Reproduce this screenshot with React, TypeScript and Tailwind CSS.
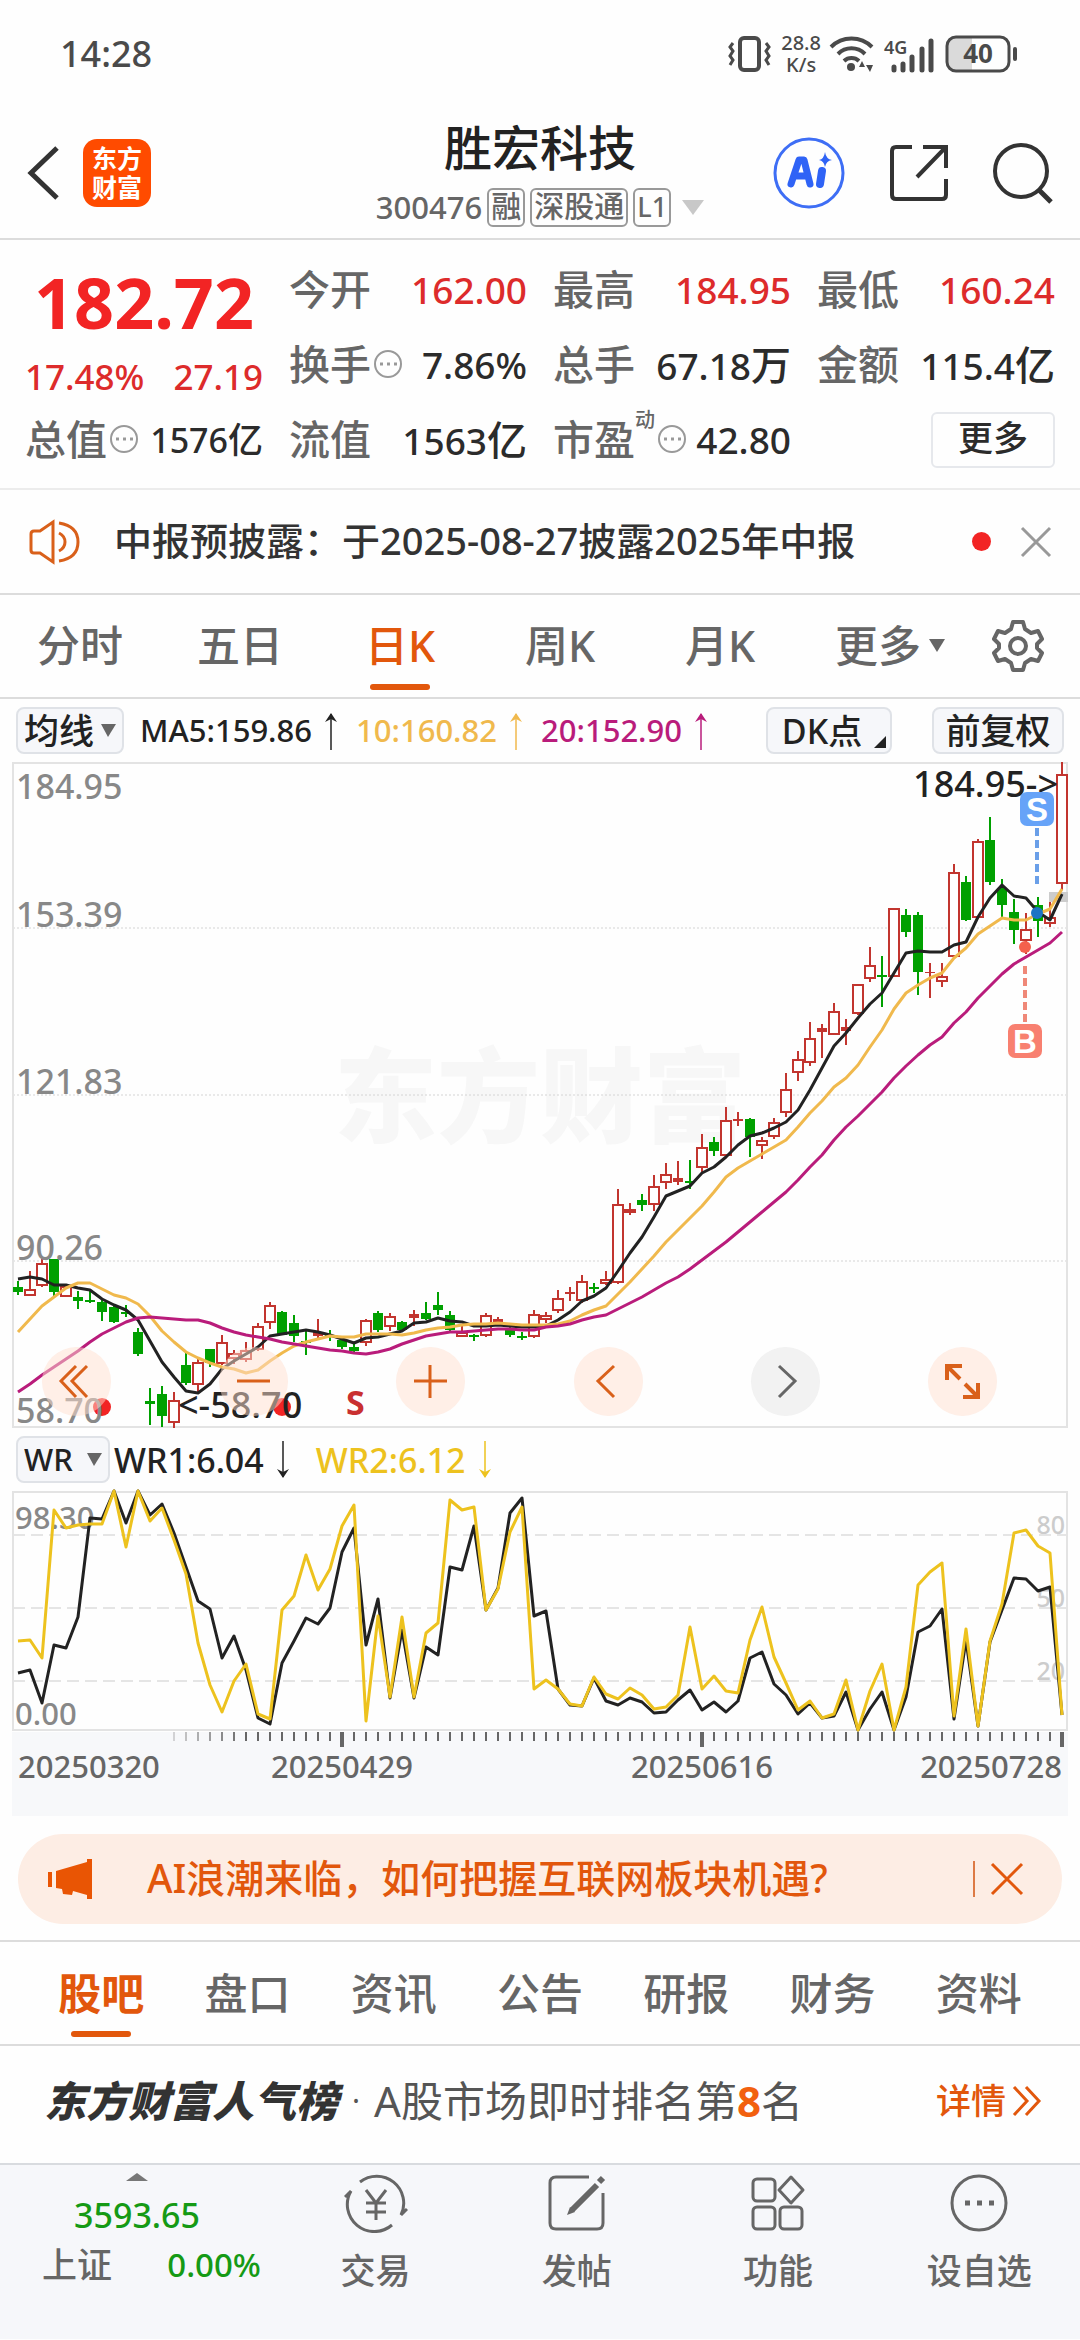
import React, { useState } from "react";
import clsx from "clsx";

type Candle = [kind: "g" | "r" | "f", high: number, top: number, bottom: number, low: number];

// g = falling, r = rising (hollow), f = rising (filled)
const candles: Candle[] = [
  ["g", 519, 525, 530, 533], ["r", 509, 527, 534, 534], ["r", 497, 501, 524, 525], ["g", 497, 497, 530, 534],
  ["r", 522, 524, 535, 535], ["g", 529, 535, 539, 547], ["g", 529, 538, 540, 541], ["g", 538, 540, 550, 559],
  ["g", 544, 545, 560, 561], ["g", 543, 550, 552, 555], ["g", 566, 570, 592, 594], ["g", 626, 639, 642, 663],
  ["g", 624, 632, 654, 665], ["r", 630, 638, 661, 666], ["g", 590, 603, 621, 623], ["r", 596, 600, 623, 631],
  ["g", 587, 587, 601, 605], ["r", 573, 580, 602, 603], ["r", 588, 591, 597, 602], ["r", 580, 588, 598, 600],
  ["r", 561, 564, 588, 589], ["r", 540, 543, 561, 567], ["g", 549, 550, 573, 573], ["g", 553, 561, 574, 580],
  ["g", 569, 579, 581, 593], ["f", 557, 570, 574, 576], ["g", 568, 573, 575, 579], ["g", 577, 578, 585, 587],
  ["g", 581, 585, 589, 591], ["r", 557, 558, 581, 584], ["g", 549, 551, 568, 570], ["r", 551, 554, 565, 569],
  ["g", 559, 560, 568, 570], ["f", 548, 552, 556, 564], ["g", 540, 551, 557, 558], ["g", 530, 543, 548, 553],
  ["g", 549, 553, 568, 569], ["r", 562, 570, 575, 575], ["g", 572, 573, 575, 579], ["r", 551, 553, 574, 575],
  ["f", 555, 557, 561, 564], ["g", 561, 567, 573, 575], ["g", 570, 574, 576, 578], ["r", 548, 552, 575, 576],
  ["r", 550, 553, 558, 561], ["r", 528, 536, 549, 551], ["f", 525, 530, 532, 539], ["r", 513, 519, 539, 541],
  ["g", 521, 525, 527, 531], ["r", 509, 517, 522, 523], ["r", 427, 442, 521, 522], ["r", 441, 447, 451, 453],
  ["g", 432, 438, 443, 449], ["r", 413, 424, 443, 449], ["r", 401, 412, 421, 427], ["f", 399, 416, 420, 423],
  ["g", 398, 419, 421, 427], ["r", 372, 385, 406, 411], ["g", 375, 380, 389, 394], ["r", 345, 358, 394, 395],
  ["f", 350, 357, 359, 364], ["g", 356, 357, 375, 395], ["r", 375, 378, 384, 397], ["r", 356, 360, 375, 377],
  ["r", 311, 327, 351, 355], ["r", 289, 297, 311, 319], ["r", 260, 276, 301, 304], ["f", 262, 266, 270, 296],
  ["r", 241, 249, 273, 273], ["f", 257, 265, 269, 283], ["r", 222, 222, 252, 253], ["r", 185, 203, 217, 220],
  ["g", 194, 213, 215, 245], ["r", 146, 146, 215, 215], ["g", 147, 153, 170, 175], ["g", 150, 153, 210, 233],
  ["f", 201, 210, 211, 236], ["r", 201, 214, 220, 225], ["r", 102, 110, 195, 195], ["g", 114, 120, 158, 159],
  ["r", 77, 79, 156, 156], ["g", 55, 78, 120, 123], ["g", 117, 126, 143, 156], ["g", 137, 150, 168, 182],
  ["r", 151, 167, 179, 192], ["g", 135, 143, 159, 175], ["r", 140, 155, 162, 165], ["r", 0, 12, 122, 128],
];

const ma5 = [
  517, 515, 517, 523, 523, 526, 528, 537, 543, 548, 558, 579, 600, 615, 629, 631, 622, 607, 599, 592, 585, 574,
  572, 570, 568, 570, 573, 577, 581, 576, 575, 572, 569, 561, 560, 556, 559, 560, 564, 564, 563, 564, 565, 565,
  564, 558, 550, 539, 534, 526, 509, 491, 475, 455, 434, 429, 424, 411, 405, 395, 383, 374, 371, 366, 360, 348,
  328, 306, 284, 271, 256, 242, 231, 211, 191, 189, 190, 190, 183, 180, 155, 136, 123, 134, 136, 150, 158, 132,
];
const ma10 = [
  570, 557, 544, 535, 526, 521, 521, 527, 533, 536, 542, 554, 569, 580, 590, 596, 601, 605, 607, 611, 608, 599,
  591, 584, 580, 577, 574, 575, 575, 572, 572, 572, 573, 571, 568, 566, 565, 563, 562, 562, 561, 562, 563, 563,
  563, 562, 559, 553, 548, 544, 532, 520, 507, 494, 480, 468, 456, 444, 430, 415, 406, 399, 392, 385, 378, 365,
  351, 339, 325, 316, 303, 285, 268, 247, 231, 223, 216, 211, 196, 186, 172, 164, 156, 158, 158, 152, 147, 127,
];
const ma20 = [
  630, 622, 613, 605, 597, 589, 580, 572, 566, 560, 556, 555, 556, 557, 558, 558, 561, 566, 570, 573, 575, 577,
  580, 582, 584, 586, 588, 589, 591, 592, 590, 587, 582, 578, 574, 572, 570, 570, 569, 568, 567, 567, 568, 568,
  565, 564, 562, 558, 555, 553, 547, 541, 535, 528, 521, 515, 507, 498, 489, 480, 470, 460, 450, 440, 430, 418,
  405, 393, 378, 365, 354, 342, 330, 316, 304, 293, 283, 275, 261, 250, 236, 224, 212, 202, 195, 188, 181, 170,
];
const wr1 = [
  182, 179, 212, 154, 157, 126, 27, 28, 0, 32, 0, 24, 13, 42, 76, 110, 118, 167, 145, 179, 227, 233, 172, 150,
  127, 133, 117, 61, 37, 154, 108, 207, 139, 207, 156, 164, 76, 79, 35, 119, 97, 22, 7, 125, 120, 198, 214, 215,
  187, 210, 214, 207, 211, 222, 221, 209, 199, 219, 211, 221, 210, 167, 161, 193, 204, 223, 212, 227, 225, 201,
  239, 218, 201, 239, 206, 141, 135, 118, 228, 149, 235, 151, 119, 87, 88, 100, 96, 224,
];
const wr2 = [
  150, 149, 167, 19, 37, 34, 33, 33, 0, 56, 0, 30, 17, 49, 83, 152, 194, 221, 190, 173, 223, 228, 119, 105, 64,
  99, 78, 35, 14, 230, 125, 206, 126, 206, 142, 132, 9, 19, 16, 119, 98, 41, 16, 198, 189, 198, 213, 215, 186,
  203, 208, 197, 204, 218, 216, 204, 136, 198, 185, 200, 202, 149, 116, 166, 192, 219, 210, 227, 223, 189, 239,
  200, 173, 239, 196, 94, 81, 72, 225, 138, 235, 150, 113, 42, 39, 55, 62, 224,
];

const cx = (i: number) => 6 + i * 12;
const toPoints = (ys: number[]) => ys.map((y, i) => `${cx(i)},${y}`).join(" ");

const periods = ["分时", "五日", "日K", "周K", "月K"];
const sections = ["股吧", "盘口", "资讯", "公告", "研报", "财务", "资料"];

const StatusBar: React.FC = () => (
  <div className="flex h-[108px] items-center pr-[61px] pl-[60px] text-[#4a4a4a]">
    <span className="text-[36px] leading-none font-medium">14:28</span>
    <div className="ml-auto flex items-center gap-[8px]">
      <svg width="46" height="38" viewBox="0 0 46 38" fill="none" stroke="currentColor">
        <rect x="13" y="3" width="19" height="32" rx="4" strokeWidth="4" />
        <path d="M6 8l-3 4 3 4-3 5 3 4-3 5M39 8l3 4-3 4 3 5-3 4 3 5" strokeWidth="3" />
      </svg>
      <div className="flex flex-col text-center text-[20px] leading-[22px] font-medium">
        <span>28.8</span>
        <span>K/s</span>
      </div>
      <svg width="46" height="38" viewBox="0 0 46 38" fill="none" stroke="currentColor" strokeWidth="4">
        <path d="M2 12a29 29 0 0 1 41 0M9 19a19 19 0 0 1 27 0M15 26a11 11 0 0 1 15 0" />
        <circle cx="22" cy="32" r="4" fill="currentColor" stroke="none" />
        <path d="M30 32h6l-3-6zM37 30h7l-3 7z" fill="currentColor" stroke="none" />
      </svg>
      <svg width="54" height="42" viewBox="0 -4 54 42" fill="none" stroke="currentColor" strokeWidth="5" strokeLinecap="round">
        <path d="M11 30v3M20 27v6M29 20v13M39 12v21M48 4v29" />
        <text x="1" y="17" fontSize="18" fontWeight="600" fill="currentColor" stroke="none">4G</text>
      </svg>
      <svg width="74" height="38" viewBox="0 0 74 38" fill="none">
        <path d="M10 3h17v32H10a7 7 0 0 1-7-7V10a7 7 0 0 1 7-7z" fill="#dadada" />
        <rect x="2" y="2" width="62" height="34" rx="9" stroke="currentColor" strokeWidth="3" />
        <path d="M70 14v10" stroke="currentColor" strokeWidth="4" strokeLinecap="round" />
        <text x="33" y="28" fontSize="26" fontWeight="700" textAnchor="middle" fill="currentColor">40</text>
      </svg>
    </div>
  </div>
);

const Header: React.FC = () => (
  <header className="relative flex h-[132px] items-center justify-between border-b-2 border-[#dcdcdc] px-[26px]">
    <div className="flex items-center gap-[23px]">
      <button aria-label="返回">
        <svg width="34" height="56" viewBox="0 0 34 56" fill="none" stroke="#333" strokeWidth="5">
          <path d="M31 3L5 28l26 25" />
        </svg>
      </button>
      <div className="flex h-[68px] w-[68px] flex-col items-center justify-center rounded-[14px] bg-[#ff4b00] text-[25px] leading-[29px] font-bold text-white">
        <span>东方</span>
        <span>财富</span>
      </div>
    </div>
    <div className="absolute inset-x-[300px] top-[6px] flex flex-col items-center">
      <h1 className="text-[48px] leading-[68px] font-medium text-[#222]">胜宏科技</h1>
      <div className="flex h-[50px] items-center gap-[5px] text-[31px] leading-none font-medium text-[#666]">
        <span>300476</span>
        <span className="rounded-[6px] border-2 border-[#999] px-[2px] pt-px pb-[4px] text-[30px]">融</span>
        <span className="rounded-[6px] border-2 border-[#999] px-[2px] pt-px pb-[4px] text-[30px]">深股通</span>
        <span className="rounded-[6px] border-2 border-[#999] px-[2px] pt-[3px] pb-[5px] text-[27px]">L1</span>
        <svg className="ml-[6px]" width="22" height="15" viewBox="0 0 22 15" fill="#c8c8c8">
          <path d="M0 0h22L11 15z" />
        </svg>
      </div>
    </div>
    <div className="flex items-center gap-[43px]">
      <button aria-label="AI">
        <svg width="74" height="74" viewBox="0 0 74 74" fill="none">
          <circle cx="37" cy="37" r="34" stroke="#3e6ef5" strokeWidth="3" />
          <path d="M19 48l8-24h5l6 24M23 40h12" stroke="#2f63f6" strokeWidth="7" strokeLinejoin="round" strokeLinecap="round" />
          <path d="M50 35l-2 13" stroke="#2f63f6" strokeWidth="8" strokeLinecap="round" />
          <path d="M53 16q1 7 7 8-6 1-7 7-1-6-6-7 5-1 6-8z" fill="#2f63f6" />
        </svg>
      </button>
      <button aria-label="分享">
        <svg width="60" height="60" viewBox="0 0 60 60" fill="none" stroke="#333" strokeWidth="4">
          <path d="M23 4H7q-4 0-4 4v44q0 4 4 4h46q4 0 4-4V36M34 4h23v21M57 4L28 34" />
        </svg>
      </button>
      <button aria-label="搜索">
        <svg width="62" height="62" viewBox="0 0 62 62" fill="none" stroke="#333" strokeWidth="4">
          <circle cx="29" cy="29" r="26" />
          <path d="M47 48l12 12" strokeWidth="5" />
        </svg>
      </button>
    </div>
  </header>
);

const InfoDot: React.FC = () => (
  <svg className="ml-[2px] shrink-0" width="31" height="31" viewBox="0 0 31 31" fill="none">
    <circle cx="15" cy="15" r="13" stroke="#999" strokeWidth="2" />
    <path d="M7 15h3M14 15h3M21 15h3" stroke="#999" strokeWidth="3" />
  </svg>
);

interface IStat {
  label: string;
  value: string;
  unit?: string;
  red?: boolean;
  info?: boolean;
  small?: boolean;
  sup?: string;
}

const Stat: React.FC<IStat> = ({ label, value, unit, red, info, small, sup }) => (
  <div className="flex items-center whitespace-nowrap">
    <dt className="flex items-center text-[41px] font-medium text-[#666]">
      {label}
      {sup && <sup className="-top-[20px] text-[20px]">{sup}</sup>}
      {info && <InfoDot />}
    </dt>
    <dd
      className={clsx(
        "ml-auto font-medium",
        small ? "text-[34px]" : "text-[37px]",
        red ? "text-[#dd2b2b]" : "text-[#2b2b2b]"
      )}
    >
      {value}
      {unit && <span className={small ? "text-[35px]" : "text-[40px]"}>{unit}</span>}
    </dd>
  </div>
);

const Quote: React.FC = () => (
  <section className="border-b-2 border-[#ececec] px-[25px] pt-[12px] pb-[11px]">
    <dl className="grid auto-rows-[75px] grid-cols-4 gap-x-[26px] leading-none">
      <div className="row-span-2 flex flex-col items-center pt-[12px]">
        <dd className="text-[70px] leading-[76px] font-bold text-[#f22424]">182.72</dd>
        <dd className="mt-[16px] flex w-full justify-between text-[35px] leading-[42px] font-medium text-[#dd2b2b]">
          <span>17.48%</span>
          <span>27.19</span>
        </dd>
      </div>
      <Stat label="今开" value="162.00" red />
      <Stat label="最高" value="184.95" red />
      <Stat label="最低" value="160.24" red />
      <Stat label="换手" value="7.86%" info />
      <Stat label="总手" value="67.18" unit="万" />
      <Stat label="金额" value="115.4" unit="亿" />
      <Stat label="总值" value="1576" unit="亿" info small />
      <Stat label="流值" value="1563" unit="亿" />
      <Stat label="市盈" value="42.80" sup="动" info />
      <button className="h-[56px] w-[124px] self-center justify-self-end rounded-[6px] border-2 border-[#e6e8ec] pb-[4px] text-[35px] leading-none font-medium text-[#2b2b2b]">
        更多
      </button>
    </dl>
  </section>
);

const Notice: React.FC = () => (
  <section className="flex h-[105px] items-center border-b-2 border-[#dcdcdc] pr-[28px] pl-[29px]">
    <svg width="52" height="46" viewBox="0 0 52 46" fill="none" stroke="#d9601a" strokeWidth="3">
      <path d="M24 3v40L11 34H5q-3 0-3-3V15q0-3 3-3h6z" />
      <path d="M30 14q6 3 6 9t-6 9M30 4q19 3 19 19T30 42" />
    </svg>
    <p className="ml-[33px] pb-[4px] text-[38px] leading-none font-medium text-[#333]">
      中报预披露：于2025-08-27披露2025年中报
    </p>
    <span className="ml-auto h-[19px] w-[19px] rounded-full bg-[#f22424]" />
    <button aria-label="关闭公告" className="ml-[29px]">
      <svg width="32" height="32" viewBox="0 0 32 32" stroke="#999" strokeWidth="3">
        <path d="M2 2l28 28M30 2L2 30" />
      </svg>
    </button>
  </section>
);

const PeriodTabs: React.FC = () => {
  const [current, setCurrent] = useState(2);
  return (
    <nav className="flex h-[104px] border-b-2 border-[#dcdcdc] pr-[24px] text-[43px] leading-none font-medium text-[#666]">
      {periods.map((p, i) => (
        <button
          key={p}
          onClick={() => setCurrent(i)}
          className={clsx("relative flex-[160] pb-[2px]", i === current && "text-[#e2570c]")}
        >
          {p}
          {i === current && (
            <span className="absolute bottom-[7px] left-1/2 h-[6px] w-[60px] -translate-x-1/2 rounded-full bg-[#e2570c]" />
          )}
        </button>
      ))}
      <button className="flex flex-[180] items-center justify-center gap-[8px] pb-[2px]">
        更多
        <svg width="16" height="13" viewBox="0 0 16 13" fill="#666">
          <path d="M0 0h16L8 13z" />
        </svg>
      </button>
      <button aria-label="设置" className="flex flex-[76] items-center justify-center">
        <svg width="52" height="54" viewBox="0 0 52 54" fill="none" stroke="#666" strokeWidth="4" strokeLinejoin="round">
          <path d="M21 3h10l2 7 6 4 7-2 4 8-5 5v4l5 5-4 8-7-2-6 4-2 7H21l-2-7-6-4-7 2-4-8 5-5v-4l-5-5 4-8 7 2 6-4z" />
          <circle cx="26" cy="27" r="8" />
        </svg>
      </button>
    </nav>
  );
};

const Arrow: React.FC<{ color: string; down?: boolean }> = ({ color, down }) => (
  <svg width="14" height="38" viewBox="0 0 14 38" fill="none" stroke={color} className={clsx("mx-[12px]", down && "rotate-180")}>
    <path d="M7 2v36" strokeWidth="1.5" />
    <path d="M7 1l6 9-6-3-6 3z" fill={color} stroke="none" />
  </svg>
);

const Picker: React.FC<{ label: string; options: string[]; className: string }> = ({ label, options, className }) => (
  <div className={clsx("relative h-[47px]", className)}>
    <select
      aria-label={label}
      className="h-full w-full appearance-none rounded-[8px] border-2 border-[#dfe2e7] bg-[#f6f7fa] py-0 pl-[6px] leading-none font-medium text-[#222]"
    >
      {options.map((o) => (
        <option key={o}>{o}</option>
      ))}
    </select>
    <svg className="pointer-events-none absolute top-[17px] right-[8px]" width="15" height="13" viewBox="0 0 15 13" fill="#666">
      <path d="M0 0h15L7 13z" />
    </svg>
  </div>
);

const chartButtons = [
  { label: "最前", path: "M18 3L3 18l15 16M29 3L14 18l15 16", width: 3 },
  { label: "缩小", path: "M2 18h33", width: 3 },
  { label: "放大", path: "M2 18h33M18 2v33", width: 3 },
  { label: "向前", path: "M24 3L8 18l16 16", width: 3 },
  { label: "向后", path: "M12 3l16 15-16 16", width: 3, muted: true },
  { label: "全屏", path: "M3 17V3h15M4 4l12 12M34 20v14H19M33 33L21 21", width: 4 },
];

const KLineChart: React.FC = () => (
  <div className="relative">
    <svg viewBox="0 0 1056 666" className="block h-auto w-full overflow-visible" fontSize="34" fontWeight="500">
      <text x="528" y="373" fontSize="103" fontWeight="900" textAnchor="middle" fill="#f7f7f7">东方财富</text>
      {[166, 333, 499].map((y) => (
        <path key={y} d={`M1 ${y}H1056`} stroke="#d4d4d4" strokeDasharray="2 2" />
      ))}
      <rect x="1" y="1" width="1054" height="664" fill="none" stroke="#e3e3e3" strokeWidth="2" />
      <rect x="1037" y="130" width="19" height="10" fill="#ccc" />
      {candles.map(([kind, high, top, bottom, low], i) => {
        const x = cx(i);
        const color = kind === "g" ? "#00a000" : "#c2352f";
        return (
          <g key={i} fill={color} stroke={color} strokeWidth="2">
            <path d={`M${x} ${high}V${top}M${x} ${bottom}V${low}`} />
            {kind === "r" ? (
              <rect x={x - 5} y={top + 1} width="10" height={Math.max(bottom - top - 2, 1)} fill="#fff" />
            ) : (
              <rect x={x - 5} y={top} width="10" height={Math.max(bottom - top, 1)} stroke="none" />
            )}
          </g>
        );
      })}
      <g fill="none" strokeWidth="3" strokeLinejoin="round">
        <polyline points={toPoints(ma5)} stroke="#222" />
        <polyline points={toPoints(ma10)} stroke="#f0b94d" />
        <polyline points={toPoints(ma20)} stroke="#b91c7b" />
      </g>
      <g fill="#888">
        <text x="4" y="37">184.95</text>
        <text x="4" y="165">153.39</text>
        <text x="4" y="332">121.83</text>
        <text x="4" y="498">90.26</text>
      </g>
      <circle cx="90" cy="645" r="9" fill="#f22424" />
      <circle cx="270" cy="645" r="9" fill="#f22424" />
      <text x="4" y="661" fill="#888">58.70</text>
      <text x="166" y="656" fontSize="36" fill="#222">&lt;-58.70</text>
      <text x="334" y="653" fontWeight="700" fill="#c93030">S</text>
      <text x="1046" y="35" fontSize="36" textAnchor="end" fill="#222">184.95-&gt;</text>
      <path d="M1025 66v58" stroke="#6a9fe8" strokeWidth="4" strokeDasharray="8 4" />
      <circle cx="1025" cy="151" r="6" fill="#1d74c4" />
      <rect x="1008" y="30" width="34" height="34" rx="7" fill="#66a3f8" />
      <path d="M1013 204v58" stroke="#ef8878" strokeWidth="4" strokeDasharray="8 4" />
      <circle cx="1013" cy="185" r="6" fill="#f4604c" />
      <rect x="996" y="262" width="34" height="34" rx="7" fill="#f88070" />
      <g fill="#fff" className="font-['Liberation_Sans',sans-serif]" fontSize="33" fontWeight="700" textAnchor="middle">
        <text x="1025" y="59">S</text>
        <text x="1013" y="291">B</text>
      </g>
    </svg>
    <div className="absolute right-[71px] bottom-[12px] left-[30px] flex justify-between">
      {chartButtons.map(({ label, path, width, muted }) => (
        <button
          key={label}
          aria-label={label}
          className={clsx(
            "flex h-[69px] w-[69px] items-center justify-center rounded-full",
            muted ? "bg-[#e5e5e5]/50" : "bg-[#ffe0d0]/50"
          )}
        >
          <svg width="37" height="37" viewBox="0 0 37 37" fill="none" stroke={muted ? "#666" : "#d9601a"} strokeWidth={width}>
            <path d={path} />
          </svg>
        </button>
      ))}
    </div>
  </div>
);

const WrChart: React.FC = () => (
  <svg viewBox="0 0 1056 325" className="block h-auto w-full overflow-visible" fontSize="31" fontWeight="500">
    <rect y="241" width="1056" height="84" fill="#f7f8fa" />
    {[44, 117, 190].map((y) => (
      <path key={y} d={`M1 ${y}H1056`} stroke="#ccc" strokeWidth="1" strokeDasharray="12 6" />
    ))}
    <g fontSize="25" fill="#ccc" textAnchor="end">
      <text x="1053" y="43">80</text>
      <text x="1053" y="116">50</text>
      <text x="1053" y="189">20</text>
    </g>
    <rect x="1" y="1" width="1054" height="238" fill="none" stroke="#e3e3e3" strokeWidth="2" />
    <g fill="#888">
      <text x="3" y="38">98.30</text>
      <text x="3" y="234">0.00</text>
    </g>
    <g fill="none" strokeWidth="3" strokeLinejoin="round">
      <polyline points={toPoints(wr1)} stroke="#222" />
      <polyline points={toPoints(wr2)} stroke="#edc21e" />
    </g>
    {candles.map((_, i) => {
      if (i < 13) return null;
      const major = i === 27 || i === 57 || i === 87;
      return (
        <path
          key={i}
          d={`M${cx(i)} 241v${major ? 15 : 9}`}
          stroke="#666"
          strokeWidth={major ? 4 : 2}
          opacity={Math.min(1, (i - 11) / 8)}
        />
      );
    })}
    <g fill="#666">
      <text x="6" y="287">20250320</text>
      <text x="330" y="287" textAnchor="middle">20250429</text>
      <text x="690" y="287" textAnchor="middle">20250616</text>
      <text x="1050" y="287" textAnchor="end">20250728</text>
    </g>
  </svg>
);

const SectionTabs: React.FC = () => {
  const [current, setCurrent] = useState(0);
  return (
    <nav className="flex h-[106px] border-y-2 border-[#dcdcdc] px-[28px] text-[43px] leading-none font-medium text-[#666]">
      {sections.map((s, i) => (
        <button
          key={s}
          onClick={() => setCurrent(i)}
          className={clsx("relative flex-1", i === current && "font-bold text-[#e2570c]")}
        >
          {s}
          {i === current && (
            <span className="absolute bottom-[7px] left-1/2 h-[6px] w-[60px] -translate-x-1/2 rounded-full bg-[#e2570c]" />
          )}
        </button>
      ))}
    </nav>
  );
};

const bottomItems = [
  {
    label: "交易",
    icon: (
      <>
        <path d="M16 9A27 27 0 0 1 57 42l6-6M48 52A27 27 0 0 1 7 18l-6 6" />
        <path d="M22 17l10 13 10-13M32 30v17M22 30h20M22 39h20" />
      </>
    ),
  },
  {
    label: "发帖",
    icon: (
      <>
        <path d="M44 4H11q-6 0-6 6v40q0 6 6 6h41q6 0 6-6V20" />
        <path d="M52 12L27 37" strokeWidth="6" />
        <path d="M54 9l4-4" strokeWidth="6" />
        <path d="M25 34l-3 8 8-3z" fill="#666" stroke="none" />
      </>
    ),
  },
  {
    label: "功能",
    icon: (
      <>
        <rect x="7" y="6" width="22" height="22" rx="4" />
        <rect x="7" y="34" width="22" height="22" rx="4" />
        <rect x="34" y="34" width="22" height="22" rx="4" />
        <path d="M45 4l12 13-12 13-12-13z" strokeLinejoin="round" />
      </>
    ),
  },
  {
    label: "设自选",
    icon: (
      <>
        <circle cx="32" cy="30" r="27" />
        <path d="M18 30h5M30 30h5M42 30h5" strokeWidth="5" />
      </>
    ),
  },
];

const BottomBar: React.FC = () => (
  <footer className="flex h-[176px] border-t-2 border-[#d8dbdf] bg-[#f6f7fa] font-medium text-[#666]">
    <div className="flex w-[275px] flex-col items-center pt-[8px] pr-px">
      <svg width="22" height="8" viewBox="0 0 22 8" fill="#777">
        <path d="M11 0l11 8H0z" />
      </svg>
      <span className="mt-[12px] text-[34px] leading-[44px] text-[#159a15]">3593.65</span>
      <div className="mt-[6px] flex w-full items-center justify-between pr-[13px] pl-[42px] leading-[44px]">
        <span className="text-[35px]">上证</span>
        <span className="text-[33px] text-[#159a15]">0.00%</span>
      </div>
    </div>
    {bottomItems.map(({ label, icon }) => (
      <button key={label} className="flex flex-1 flex-col items-center pt-[8px] text-[35px] leading-[44px]">
        <svg width="64" height="60" viewBox="0 0 64 60" fill="none" stroke="#666" strokeWidth="3">
          {icon}
        </svg>
        <span className="mt-[16px]">{label}</span>
      </button>
    ))}
  </footer>
);

const App: React.FC = () => (
  <main className="min-h-screen w-full bg-[#fefefe] font-['Noto_Sans','Noto_Sans_CJK_SC',sans-serif]">
    <StatusBar />
    <Header />
    <Quote />
    <Notice />
    <PeriodTabs />

    <div className="flex h-[63px] items-center px-[16px] text-[31px] leading-none font-medium whitespace-nowrap">
      <Picker label="主图指标" options={["均线", "BOLL"]} className="mr-[16px] w-[108px] text-[35px]" />
      <span className="text-[#222]">MA5:159.86</span>
      <Arrow color="#222" />
      <span className="ml-[6px] text-[#f0b94d]">10:160.82</span>
      <Arrow color="#f0b94d" />
      <span className="ml-[6px] text-[#b91c7b]">20:152.90</span>
      <Arrow color="#b91c7b" />
      <button className="relative ml-auto h-[47px] w-[126px] rounded-[8px] border-2 border-[#dfe2e7] bg-[#f6f7fa] pr-[14px] text-[34px] leading-none text-[#222]">
        DK点
        <svg className="absolute right-[4px] bottom-[4px]" width="12" height="12" viewBox="0 0 12 12" fill="#222">
          <path d="M12 0v12H0z" />
        </svg>
      </button>
      <button className="ml-[40px] h-[47px] w-[132px] rounded-[8px] border-2 border-[#dfe2e7] bg-[#f6f7fa] text-[35px] leading-none text-[#222]">
        前复权
      </button>
    </div>
    <div className="px-[12px]">
      <KLineChart />
    </div>
    <div className="flex h-[63px] items-center px-[16px] text-[34px] leading-none font-medium whitespace-nowrap">
      <Picker label="副图指标" options={["WR", "MACD"]} className="mr-[4px] w-[94px] text-[31px]" />
      <span className="text-[#222]">WR1:6.04</span>
      <Arrow color="#222" down />
      <span className="ml-[14px] text-[#edc21e]">WR2:6.12</span>
      <Arrow color="#edc21e" down />
    </div>
    <div className="px-[12px]">
      <WrChart />
    </div>

    <aside className="mx-[18px] mt-[18px] mb-[16px] flex h-[90px] items-center rounded-full bg-[#fdede4] pr-[38px] pl-[29px]">
      <svg width="48" height="42" viewBox="0 0 48 42" fill="#e95504">
        <path d="M1 14h4v15H1zM9 13l31-9V1h5v40h-5v-4l-14-4-1 4-9-1-1-5-6-1z" />
      </svg>
      <a href="#ai" className="ml-[52px] pb-[4px] text-[39px] leading-none font-medium text-[#e2570c]">
        AI浪潮来临，如何把握互联网板块机遇?
      </a>
      <span className="ml-auto h-[36px] w-[2px] bg-[#dd7a45]" />
      <button aria-label="关闭广告" className="ml-[15px]">
        <svg width="34" height="34" viewBox="0 0 34 34" stroke="#e2570c" strokeWidth="3">
          <path d="M2 2l30 30M32 2L2 32" />
        </svg>
      </button>
    </aside>

    <SectionTabs />

    <section className="flex h-[117px] items-center pr-[38px] pb-[8px] pl-[44px] leading-none whitespace-nowrap">
      <strong className="text-[42px] font-black text-[#333] italic">东方财富人气榜</strong>
      <span className="mx-[14px] text-[30px] text-[#555]">·</span>
      <p className="text-[42px] text-[#555]">
        A股市场即时排名第<b className="text-[#f2600f]">8</b>名
      </p>
      <a href="#rank" className="ml-auto flex items-center gap-[6px] text-[35px] font-medium text-[#e2570c]">
        详情
        <svg width="30" height="32" viewBox="0 0 30 32" fill="none" stroke="#e2570c" strokeWidth="3">
          <path d="M2 2l13 14L2 30M14 2l13 14-13 14" />
        </svg>
      </a>
    </section>

    <BottomBar />
  </main>
);

export default App;
